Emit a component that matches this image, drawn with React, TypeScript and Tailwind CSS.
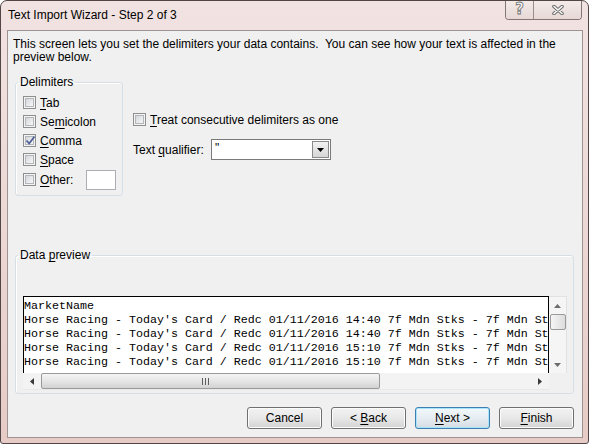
import React from "react";

const previewRows = [
  "MarketName",
  "Horse Racing - Today's Card / Redc 01/11/2016 14:40 7f Mdn Stks - 7f Mdn St",
  "Horse Racing - Today's Card / Redc 01/11/2016 14:40 7f Mdn Stks - 7f Mdn St",
  "Horse Racing - Today's Card / Redc 01/11/2016 15:10 7f Mdn Stks - 7f Mdn St",
  "Horse Racing - Today's Card / Redc 01/11/2016 15:10 7f Mdn Stks - 7f Mdn St",
];

function Key({ children }: { children: React.ReactNode }) {
  return <span className="underline decoration-1 underline-offset-[2px]">{children}</span>;
}

function CheckBox({ checked = false }: { checked?: boolean }) {
  return (
    <span className="w-[13px] h-[13px] shrink-0 border border-[#8e8f8f] bg-[#f4f4f4] p-[1px] flex">
      <span className="relative flex-1 border border-[#b3b6ba] bg-gradient-to-br from-[#d4d7db] to-[#f7f7f7]">
        {checked && (
          <svg className="absolute -left-[1px] -top-[2px]" width="11" height="11" viewBox="0 0 11 11">
            <path d="M1.5 5.5 L4.2 8.5 L9.5 1.5" fill="none" stroke="#4a5d96" strokeWidth="1.7" />
          </svg>
        )}
      </span>
    </span>
  );
}

function CheckRow({ label, checked }: { label: React.ReactNode; checked?: boolean }) {
  return (
    <div className="h-[19px] flex items-center gap-[4px]">
      <CheckBox checked={checked} />
      <span>{label}</span>
    </div>
  );
}

function Arrow({ dir }: { dir: "up" | "down" | "left" | "right" }) {
  const pts = {
    up: "0,4 7,4 3.5,0",
    down: "0,0 7,0 3.5,4",
    left: "4,0 4,7 0,3.5",
    right: "0,0 0,7 4,3.5",
  }[dir];
  const vertical = dir === "up" || dir === "down";
  return (
    <svg width={vertical ? 7 : 4} height={vertical ? 4 : 7} viewBox={vertical ? "0 0 7 4" : "0 0 4 7"}>
      <polygon points={pts} fill={vertical ? "#6d6d6d" : "#3a3a3a"} />
    </svg>
  );
}

function WinButton({ children, primary = false }: { children: React.ReactNode; primary?: boolean }) {
  return (
    <div
      className={`w-[75px] h-[22px] rounded-[3px] border flex items-center justify-center ${
        primary
          ? "border-[#3c7fb1] shadow-[inset_0_0_0_1px_#a8e4fb] bg-gradient-to-b from-[#f2f8fb] via-[#e6eef3] to-[#d5dde2]"
          : "border-[#707070] shadow-[inset_0_0_0_1px_#fcfcfc] bg-gradient-to-b from-[#f2f2f2] via-[#e8e8e8] to-[#d3d3d3]"
      }`}
    >
      <span>{children}</span>
    </div>
  );
}

export default function App() {
  return (
    <div className="w-[589px] h-[444px] flex flex-col overflow-hidden rounded-t-[7px] rounded-b-[3px] border border-[#524545] bg-gradient-to-b from-[#f1e3e2] via-[#ecd8d5] to-[#e6cbc6] font-['Liberation_Sans',Arial,sans-serif] text-[12px] text-black">
      {/* Title bar */}
      <div className="h-[29px] shrink-0 flex items-start pl-[7px]">
        <span className="mt-[7px] leading-[14px]">Text Import Wizard - Step 2 of 3</span>
        <div className="ml-auto mr-[6px] -mt-[1px] h-[20px] flex rounded-b-[4px] border border-t-0 border-[#857676] overflow-hidden shadow-[inset_0_0_0_1px_#f8f2f1]">
          <div className="w-[28px] flex items-center justify-center bg-gradient-to-b from-[#f4ecea] to-[#e6d8d5] border-r border-[#9b8d8c]">
            <span className="font-['DejaVu_Sans',sans-serif] font-bold text-[15px] leading-[15px] text-[#f8f8f8] [-webkit-text-stroke:0.8px_#6e6e6e]">?</span>
          </div>
          <div className="w-[47px] flex items-center justify-center bg-gradient-to-b from-[#f4ecea] to-[#e6d8d5]">
            <svg width="12" height="10" viewBox="0 0 12 10">
              <path d="M2 1.5 L10 8.5 M10 1.5 L2 8.5" stroke="#6e6e6e" strokeWidth="3.6" strokeLinecap="round" />
              <path d="M2 1.5 L10 8.5 M10 1.5 L2 8.5" stroke="#fafafa" strokeWidth="1.6" strokeLinecap="round" />
            </svg>
          </div>
        </div>
      </div>

      {/* Client area */}
      <div className="flex-1 ml-[6px] mr-[5px] mb-[5px] border border-[#9f9392] bg-[#f0f0f0] flex flex-col">
        <p className="pl-[5px] pt-[7px] leading-[13px] whitespace-pre">
          {"This screen lets you set the delimiters your data contains.  You can see how your text is affected in the"}
          <br />
          {"preview below."}
        </p>

        <div className="flex items-start mt-[11px] ml-[7px]">
          <fieldset className="w-[108px] rounded-[3px] border border-[#d5dfe5] shadow-[inset_1px_1px_0_#fff] pl-[7px] pr-[6px] pt-[4px] pb-[5px]">
            <legend className="-ml-[5px] px-[2px] leading-[14px]">Delimiters</legend>
            <CheckRow label={<><Key>T</Key>ab</>} />
            <CheckRow label={<>Se<Key>m</Key>icolon</>} />
            <CheckRow label={<><Key>C</Key>omma</>} checked />
            <CheckRow label={<><Key>S</Key>pace</>} />
            <div className="h-[21px] flex items-center">
              <CheckBox />
              <span className="ml-[4px] w-[46px]">
                <Key>O</Key>ther:
              </span>
              <div className="w-[30px] h-[20px] border border-[#abadb3] bg-white" />
            </div>
          </fieldset>

          <div className="ml-[10px] flex flex-col">
            <div className="mt-[35px]">
              <CheckRow label={<><Key>T</Key>reat consecutive delimiters as one</>} />
            </div>
            <div className="mt-[10px] flex items-center">
              <span className="w-[78px]">
                Text <Key>q</Key>ualifier:
              </span>
              <div className="w-[120px] h-[21px] border border-[#7a7a7a] bg-white flex items-stretch">
                <span className="flex-1 pl-[3px] leading-[16px]">"</span>
                <div className="w-[17px] m-[1px] border border-[#8a8a8a] bg-gradient-to-b from-[#f2f2f2] to-[#d6d6d6] flex items-center justify-center">
                  <svg width="7" height="4" viewBox="0 0 7 4">
                    <polygon points="0,0 7,0 3.5,4" fill="#000" />
                  </svg>
                </div>
              </div>
            </div>
          </div>
        </div>

        <fieldset className="mt-[52px] ml-[7px] w-[559px] rounded-[3px] border border-[#d5dfe5] shadow-[inset_1px_1px_0_#fff] pl-[7px] pb-[3px]">
          <legend className="-ml-[5px] px-[2px] leading-[14px]">
            Data <Key>p</Key>review
          </legend>
          <div className="mt-[34px] grid grid-cols-[526px_18px] grid-rows-[77px_17px] w-[544px]">
            <div className="border-t border-l border-r border-black bg-white overflow-hidden pt-[2px] font-['Liberation_Mono',monospace] text-[11.67px] leading-[14px] whitespace-pre">
              {previewRows.map((row, i) => (
                <div key={i}>{row}</div>
              ))}
            </div>
            <div className="border-t border-r border-[#e2e2e2] bg-[#f5f5f5] flex flex-col items-center">
              <div className="h-[17px] flex items-center justify-center">
                <Arrow dir="up" />
              </div>
              <div className="w-[16px] h-[16px] rounded-[2px] border border-[#9a9a9a] bg-gradient-to-r from-[#f5f5f5] to-[#dcdcdc]" />
              <div className="flex-1" />
              <div className="h-[17px] flex items-center justify-center">
                <Arrow dir="down" />
              </div>
            </div>
            <div className="bg-[#f3f3f3] flex items-center border-b border-[#e8e8e8]">
              <div className="w-[18px] flex justify-center">
                <Arrow dir="left" />
              </div>
              <div className="w-[339px] h-[16px] rounded-[2px] border border-[#9a9a9a] bg-gradient-to-b from-[#f4f4f4] via-[#e6e6e6] to-[#d2d2d2] flex items-center justify-center">
                <div className="flex gap-[2px] -ml-[10px]">
                  <span className="w-[1px] h-[7px] bg-[#5e5e5e]" />
                  <span className="w-[1px] h-[7px] bg-[#5e5e5e]" />
                  <span className="w-[1px] h-[7px] bg-[#5e5e5e]" />
                </div>
              </div>
              <div className="flex-1" />
              <div className="w-[18px] flex justify-center">
                <Arrow dir="right" />
              </div>
            </div>
            <div className="bg-[#f0f0f0]" />
          </div>
        </fieldset>

        <div className="mt-[13px] pr-[8px] flex justify-end gap-[9px]">
          <WinButton>Cancel</WinButton>
          <WinButton>
            &lt; <Key>B</Key>ack
          </WinButton>
          <WinButton primary>
            <Key>N</Key>ext &gt;
          </WinButton>
          <WinButton>
            <Key>F</Key>inish
          </WinButton>
        </div>
      </div>
    </div>
  );
}
